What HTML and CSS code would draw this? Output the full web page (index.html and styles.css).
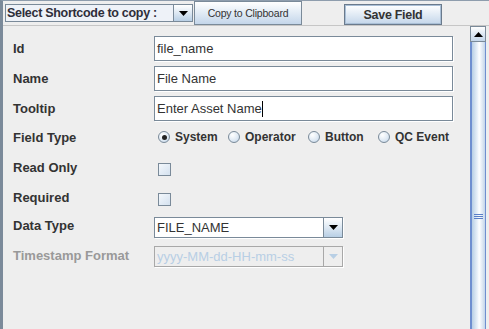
FILE: index.html
```html
<!DOCTYPE html>
<html lang="en">

<head>
    <meta charset="UTF-8">
    <title>Field Editor</title>
    <link rel="stylesheet" href="styles.css">
</head>

<body>
    <div class="window">
        <div class="toolbar">
            <div class="combo comboTop">
                <span class="comboText">Select Shortcode to copy :</span>
                <span class="comboArrow">
                    <svg width="9" height="5" viewBox="0 0 9 5"><path d="M0 0H9L4.5 5Z" fill="#000"/></svg>
                </span>
            </div>
            <button class="btn btnCopy">Copy to Clipboard</button>
            <button class="btn btnSave">Save Field</button>
        </div>

        <div class="main">
            <div class="form">
                <div class="row rowText">
                    <div class="label">Id</div>
                    <div class="field">file_name</div>
                </div>
                <div class="row rowText">
                    <div class="label">Name</div>
                    <div class="field">File Name</div>
                </div>
                <div class="row rowText">
                    <div class="label">Tooltip</div>
                    <div class="field">Enter Asset Name<span class="caret"></span></div>
                </div>
                <div class="row rowType">
                    <div class="label">Field Type</div>
                    <div class="radios">
                        <span class="radio radioSystem"><span class="dot checked"></span>System</span>
                        <span class="radio radioOperator"><span class="dot"></span>Operator</span>
                        <span class="radio radioButton"><span class="dot"></span>Button</span>
                        <span class="radio"><span class="dot"></span>QC Event</span>
                    </div>
                </div>
                <div class="row rowRead">
                    <div class="label up">Read Only</div>
                    <span class="check"></span>
                </div>
                <div class="row rowReq">
                    <div class="label up">Required</div>
                    <span class="check"></span>
                </div>
                <div class="row rowData">
                    <div class="label up">Data Type</div>
                    <div class="combo comboForm">
                        <span class="comboText">FILE_NAME</span>
                        <span class="comboArrow">
                            <svg width="9" height="5" viewBox="0 0 9 5"><path d="M0 0H9L4.5 5Z" fill="#000"/></svg>
                        </span>
                    </div>
                </div>
                <div class="row rowStamp">
                    <div class="label up disabled">Timestamp Format</div>
                    <div class="combo comboForm comboOff">
                        <span class="comboText">yyyy-MM-dd-HH-mm-ss</span>
                        <span class="comboArrow">
                            <svg width="9" height="5" viewBox="0 0 9 5"><path d="M0 0H9L4.5 5Z" fill="#b8cfe5"/></svg>
                        </span>
                    </div>
                </div>
            </div>

            <div class="scrollbar">
                <div class="scrollUp">
                    <svg width="9" height="5" viewBox="0 0 9 5"><path d="M0 5H9L4.5 0Z" fill="#000"/></svg>
                </div>
                <div class="thumb">
                    <span class="grip"></span>
                </div>
            </div>
        </div>
    </div>
</body>

</html>
```

FILE: styles.css
```css
html,
body {
    margin: 0;
    padding: 0;
    width: 489px;
    height: 329px;
    overflow: hidden;
    background: #eeeeee;
}

body {
    font-family: "Liberation Sans", Arial, sans-serif;
    color: #333333;
}

.window {
    height: 328px;
    border-top: 1px solid #8e9dad;
    border-left: 3px solid #7b8a9a;
    display: flex;
    flex-direction: column;
}

.toolbar {
    height: 24px;
    display: flex;
    align-items: flex-start;
    padding-left: 2px;
    border-bottom: 1px solid #c6c6c6;
}

.combo {
    display: flex;
    box-sizing: border-box;
    border: 1px solid #7a8a99;
    background: #ffffff;
}

.comboTop {
    margin-top: 3px;
    width: 188px;
    height: 18px;
    background: #eef2f8;
}

.comboText {
    flex: 1;
    display: flex;
    align-items: center;
    padding-left: 2px;
    font-size: 13px;
    white-space: nowrap;
    overflow: hidden;
}

.comboTop .comboText {
    font-weight: bold;
    font-size: 12.5px;
    letter-spacing: -0.3px;
    color: #2e2e3a;
    padding-left: 1px;
}

.comboArrow {
    width: 18px;
    display: flex;
    align-items: center;
    justify-content: center;
    border-left: 1px solid #7a8a99;
    background: linear-gradient(#ffffff, #dde8f3 50%, #b8cfe5);
}

.btn {
    box-sizing: border-box;
    border: 1px solid #7a8a99;
    background: linear-gradient(#ffffff, #e4edf6 45%, #c4d6ea);
    font-family: "Liberation Sans", Arial, sans-serif;
    color: #333333;
    padding: 0;
}

.btnCopy {
    margin-left: 1px;
    width: 108px;
    height: 24px;
    font-size: 10.5px;
    letter-spacing: -0.2px;
}

.btnSave {
    margin-left: 42px;
    margin-top: 3px;
    width: 98px;
    height: 21px;
    font-size: 12.5px;
    font-weight: bold;
    letter-spacing: -0.3px;
    border-color: #6a7a8c;
    box-shadow: inset 0 0 0 1px #a9bfd6;
}

.main {
    flex: 1;
    display: flex;
}

.form {
    width: 457px;
    padding: 10px 0 0 10px;
}

.row {
    display: flex;
    align-items: center;
    margin-bottom: 5px;
}

.label {
    width: 141px;
    font-size: 13px;
    font-weight: bold;
    flex-shrink: 0;
}

.label.up {
    margin-top: -3px;
}

.label.disabled {
    color: #999999;
}

.rowText {
    height: 25px;
}

.field {
    box-sizing: border-box;
    width: 299px;
    height: 25px;
    border: 1px solid #7a8a99;
    box-shadow: 1px 1px 0 #ffffff;
    background: #ffffff;
    font-size: 13px;
    padding-left: 2px;
    display: flex;
    align-items: center;
    white-space: nowrap;
}

.caret {
    display: inline-block;
    width: 1px;
    height: 16px;
    background: #000000;
}

.rowType {
    height: 22px;
}

.radios {
    display: flex;
    align-items: center;
    padding-left: 4px;
}

.radio {
    display: flex;
    align-items: center;
    font-size: 12px;
    font-weight: bold;
}

.radioSystem {
    width: 70px;
}

.radioOperator {
    width: 80px;
}

.radioButton {
    width: 70px;
}

.dot {
    box-sizing: border-box;
    width: 12px;
    height: 12px;
    border-radius: 50%;
    border: 1px solid #7a8a99;
    background: radial-gradient(circle at 35% 30%, #ffffff, #dde8f3 60%, #b8cfe5);
    margin-right: 5px;
    position: relative;
}

.dot.checked::after {
    content: "";
    position: absolute;
    left: 2.5px;
    top: 2.5px;
    width: 5px;
    height: 5px;
    border-radius: 50%;
    background: #222222;
}

.rowRead {
    height: 32px;
}

.rowReq {
    height: 18px;
}

.check {
    box-sizing: border-box;
    width: 13px;
    height: 13px;
    margin-left: 4px;
    border: 1px solid #7a8a99;
    background: linear-gradient(135deg, #f4f8fc, #d4e1ef);
}

.rowData {
    height: 28px;
}

.rowStamp {
    height: 21px;
}

.comboForm {
    width: 189px;
    height: 21px;
    box-shadow: 1px 1px 0 #ffffff;
}

.comboForm .comboArrow {
    width: 18px;
}

.comboOff {
    border-color: #a8a8a8;
    background: #eeeeee;
}

.comboOff .comboText {
    color: #b8cfe5;
}

.comboOff .comboArrow {
    border-left-color: #a8a8a8;
    background: #eeeeee;
}

.scrollbar {
    width: 16px;
    display: flex;
    flex-direction: column;
}

.scrollUp {
    box-sizing: border-box;
    height: 16px;
    border: 1px solid #7a8a99;
    background: linear-gradient(#ffffff, #dde8f3 50%, #c4d6ea);
    display: flex;
    align-items: center;
    justify-content: center;
}

.thumb {
    flex: 1;
    box-sizing: border-box;
    border-left: 2px solid #6f8fd0;
    border-right: 1px solid #6f8fd0;
    background: linear-gradient(90deg, #b8cfe5, #eef4fb 45%, #ffffff 55%, #c4d6ea);
    display: flex;
    align-items: center;
    justify-content: center;
    padding-top: 62px;
}

.grip {
    width: 9px;
    height: 5px;
    background: repeating-linear-gradient(#5b7fc8 0 1px, transparent 1px 2px);
}
```
